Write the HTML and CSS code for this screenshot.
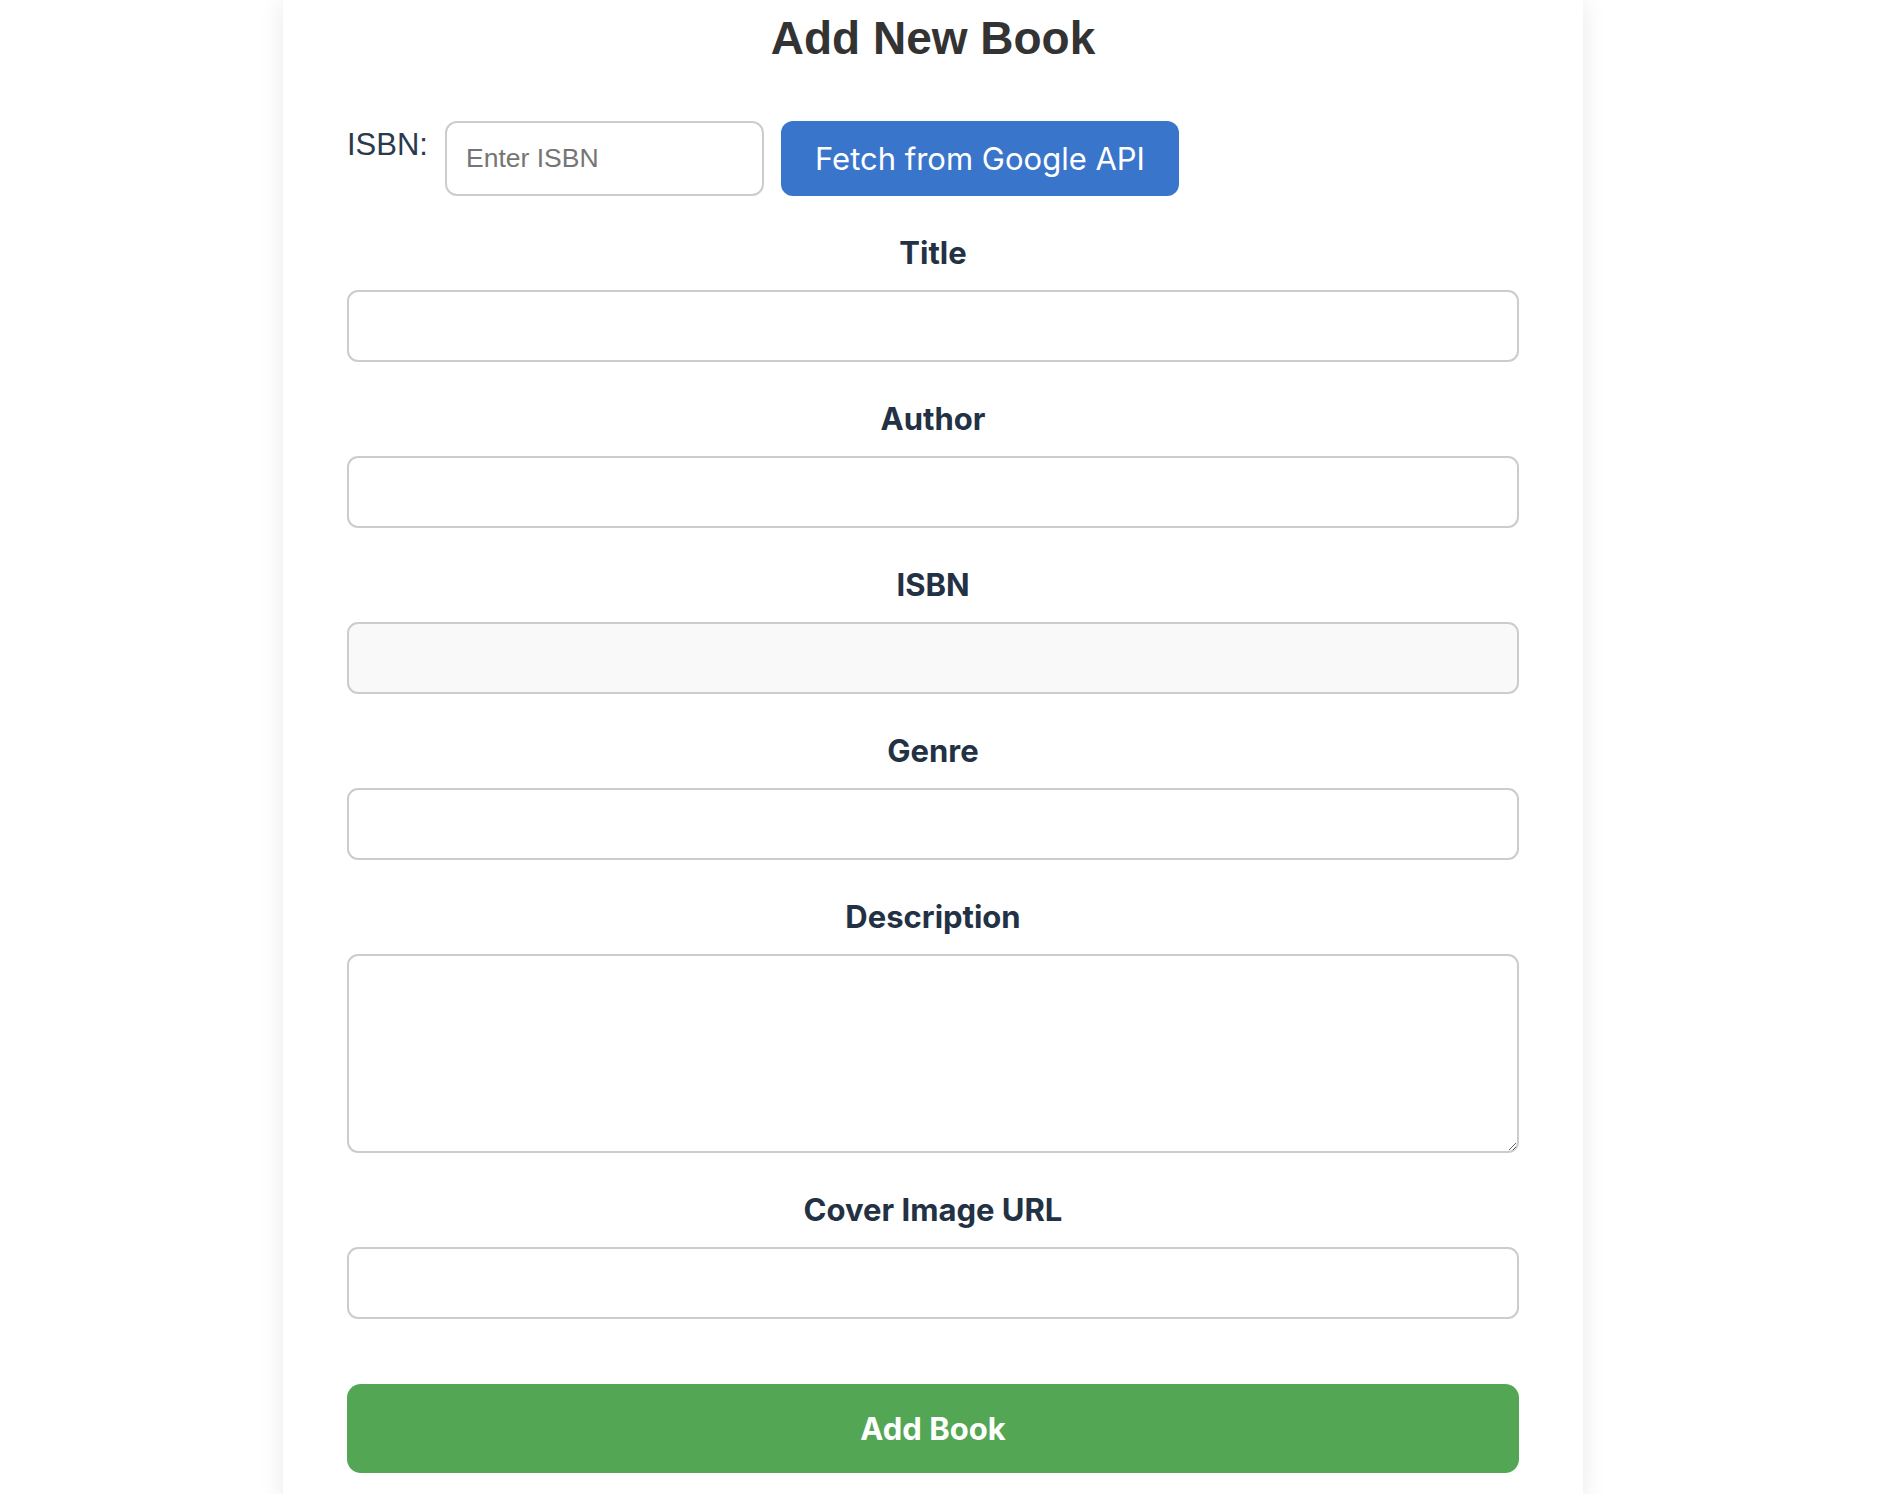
FILE: index.html
```html
<!DOCTYPE html>
<html lang="en">
<head>
<meta charset="utf-8">
<title>Add New Book</title>
<link rel="stylesheet" href="styles.css">
</head>
<body>
<div class="page">
  <div class="card">
    <h2 class="card-title">Add New Book</h2>
    <div class="isbn-row">
      <label class="isbn-label" for="isbn-lookup">ISBN:</label>
      <input class="isbn-input" id="isbn-lookup" type="text" placeholder="Enter ISBN">
      <button class="fetch-btn" type="button">Fetch from Google API</button>
    </div>
    <form class="book-form">
      <div class="field">
        <label class="field-label" for="title">Title</label>
        <input class="field-input" id="title" type="text">
      </div>
      <div class="field">
        <label class="field-label" for="author">Author</label>
        <input class="field-input" id="author" type="text">
      </div>
      <div class="field">
        <label class="field-label" for="isbn">ISBN</label>
        <input class="field-input readonly" id="isbn" type="text" readonly>
      </div>
      <div class="field">
        <label class="field-label" for="genre">Genre</label>
        <input class="field-input" id="genre" type="text">
      </div>
      <div class="field">
        <label class="field-label" for="description">Description</label>
        <textarea class="field-input field-textarea" id="description"></textarea>
      </div>
      <div class="field">
        <label class="field-label" for="cover">Cover Image URL</label>
        <input class="field-input" id="cover" type="text">
      </div>
      <button class="submit-btn" type="submit">Add Book</button>
    </form>
  </div>
</div>
</body>
</html>
```

FILE: styles.css
```css
* {
  box-sizing: border-box;
}

html, body {
  margin: 0;
  padding: 0;
  background: #ffffff;
}

body {
  font-family: Inter, "Liberation Sans", sans-serif;
}

.page {
  padding-left: 283px;
}

.card {
  width: 1300px;
  background: #ffffff;
  box-shadow: 0 0 24px rgba(0, 0, 0, 0.09);
  padding: 12px 64px 30px 64px;
  min-height: 1494px;
}

.card-title {
  margin: 0 0 57px 0;
  text-align: center;
  font-family: "Liberation Sans", Arial, sans-serif;
  font-weight: 700;
  font-size: 46px;
  line-height: 52px;
  color: #333333;
}

.isbn-row {
  display: flex;
  align-items: flex-start;
  gap: 17px;
  margin-bottom: 39px;
}

.isbn-label {
  font-family: "Liberation Sans", Arial, sans-serif;
  font-size: 31px;
  color: #2a3a4d;
  margin-top: 7px;
  line-height: 34px;
}

.isbn-input {
  width: 319px;
  height: 75px;
  border: 2px solid #cccccc;
  border-radius: 12px;
  padding: 0 19px;
  font-family: "Liberation Sans", Arial, sans-serif;
  font-size: 26.5px;
  color: #333;
  background: #fff;
}

.isbn-input::placeholder {
  color: #757575;
}

.fetch-btn {
  width: 398px;
  height: 75px;
  border: none;
  border-radius: 12px;
  background: #3a75cc;
  color: #ffffff;
  font-family: Inter, "Liberation Sans", sans-serif;
  font-size: 31px;
  font-weight: 400;
  padding: 0;
}

.book-form {
  display: flex;
  flex-direction: column;
}

.field {
  display: flex;
  flex-direction: column;
  margin-bottom: 39px;
}

.field-label {
  text-align: center;
  font-family: Inter, "Liberation Sans", sans-serif;
  font-weight: 700;
  font-size: 31px;
  line-height: 35px;
  color: #233144;
  margin-bottom: 20px;
}

.field-input {
  display: block;
  width: 100%;
  height: 72px;
  border: 2px solid #cccccc;
  border-radius: 11px;
  background: #ffffff;
  font-family: Inter, "Liberation Sans", sans-serif;
  font-size: 26px;
  padding: 0 18px;
}

.field-input.readonly {
  background: #f9f9f9;
}

.field-textarea {
  height: 199px;
  resize: vertical;
  padding: 14px 18px;
}

.submit-btn {
  width: 100%;
  height: 89px;
  margin-top: 26px;
  border: none;
  border-radius: 14px;
  background: #53a653;
  color: #ffffff;
  font-family: Inter, "Liberation Sans", sans-serif;
  font-weight: 700;
  font-size: 31px;
}
```
